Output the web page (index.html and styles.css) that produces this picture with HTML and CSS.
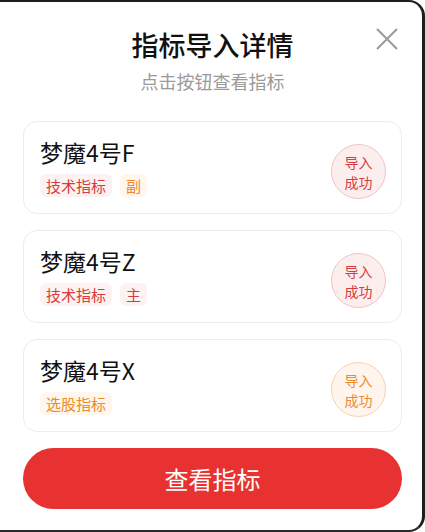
FILE: index.html
```html
<!DOCTYPE html>
<html lang="zh-CN">
<head>
<meta charset="utf-8">
<title>指标导入详情</title>
<link rel="stylesheet" href="styles.css">
</head>
<body>
<div class="page">
  <header class="header">
    <h1 class="title">指标导入详情</h1>
    <p class="subtitle">点击按钮查看指标</p>
    <button class="close" aria-label="关闭">
      <svg width="22" height="22" viewBox="0 0 22 22"><path d="M1 1 L21 21 M21 1 L1 21" stroke="#9a9a9a" stroke-width="2" fill="none"/></svg>
    </button>
  </header>
  <div class="list">
    <div class="card">
      <div class="info">
        <div class="name">梦魔4号F</div>
        <div class="tags"><span class="tag red">技术指标</span><span class="tag orange">副</span></div>
      </div>
      <div class="status red">导入<br>成功</div>
    </div>
    <div class="card">
      <div class="info">
        <div class="name">梦魔4号Z</div>
        <div class="tags"><span class="tag red">技术指标</span><span class="tag red">主</span></div>
      </div>
      <div class="status red">导入<br>成功</div>
    </div>
    <div class="card">
      <div class="info">
        <div class="name">梦魔4号X</div>
        <div class="tags"><span class="tag orange">选股指标</span></div>
      </div>
      <div class="status orange">导入<br>成功</div>
    </div>
  </div>
  <button class="primary">查看指标</button>
</div>
</body>
</html>
```
FILE: styles.css
```css
* { box-sizing: border-box; }
html, body { margin: 0; padding: 0; background: #ffffff; }
body {
  font-family: "Noto Sans CJK SC", "Noto Sans", sans-serif;
  width: 425px;
  height: 532px;
  overflow: hidden;
}
.page {
  position: relative;
  width: 425px;
  height: 532px;
  padding: 0 23px 0 23px;
  display: flex;
  flex-direction: column;
}
.page::after {
  content: "";
  position: absolute;
  left: -16px;
  top: 0;
  right: 0;
  bottom: 0;
  border-top: 2px solid #1e1e1e;
  border-right: 3px solid #1e1e1e;
  border-bottom: 2px solid #2a2a2a;
  border-radius: 16px;
  pointer-events: none;
}
.header {
  position: relative;
  text-align: center;
  padding-top: 27px;
}
.title {
  margin: 0;
  font-size: 27px;
  line-height: 36px;
  font-weight: 500;
  color: #111111;
}
.subtitle {
  margin: 5px 0 0 0;
  font-size: 18px;
  line-height: 26px;
  color: #9a9a9a;
}
.close {
  position: absolute;
  right: 4px;
  top: 28px;
  width: 22px;
  height: 22px;
  padding: 0;
  border: 0;
  background: none;
}
.close svg { display: block; }
.list {
  margin-top: 27px;
  display: flex;
  flex-direction: column;
  gap: 16px;
}
.card {
  height: 93px;
  border: 1px solid #ececec;
  border-radius: 14px;
  padding: 16px 15px 16px 16px;
  display: flex;
  align-items: center;
  justify-content: space-between;
}
.info {
  display: flex;
  flex-direction: column;
}
.name {
  font-size: 23px;
  line-height: 28px;
  color: #111111;
  margin-bottom: 8px;
}
.tags {
  display: flex;
  gap: 8px;
}
.tag {
  height: 23px;
  line-height: 23px;
  font-size: 15px;
  padding: 0 6px;
  border-radius: 6px;
}
.tag.red { color: #d93a3a; background: #fdf2f2; }
.tag.orange { color: #ec8a2c; background: #fff6ee; }
.status {
  width: 55px;
  height: 55px;
  margin-top: 8px;
  border-radius: 50%;
  display: flex;
  align-items: center;
  justify-content: center;
  text-align: center;
  font-size: 14px;
  line-height: 20px;
}
.status.red { color: #d93a3a; background: #fdeeee; border: 1px solid #f2c2c2; }
.status.orange { color: #ec8a2c; background: #fff5ec; border: 1px solid #f6d2b0; }
.primary {
  margin-top: 16px;
  height: 61px;
  width: 100%;
  border: 0;
  border-radius: 31px;
  background: #e83232;
  color: #ffffff;
  font-family: "Noto Sans CJK SC", "Noto Sans", sans-serif;
  font-size: 24px;
  letter-spacing: 0;
}
```
